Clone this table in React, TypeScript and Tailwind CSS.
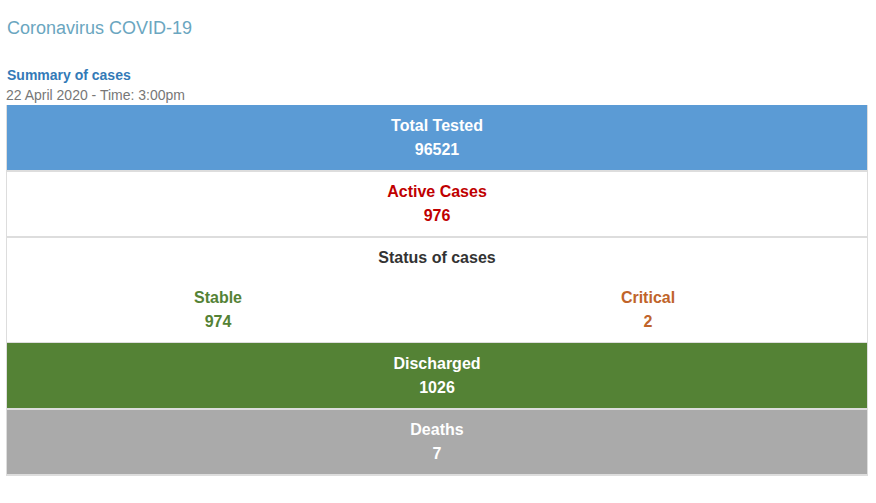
import React from "react";

export default function App() {
  return (
    <div
      className="w-[876px] h-[503px] bg-white overflow-hidden"
      style={{ fontFamily: '"Liberation Sans", Arial, sans-serif' }}
    >
      <div className="pt-[18px] pl-[7px] text-[18px] leading-[20px] text-[#6aa6c0]">
        Coronavirus COVID-19
      </div>
      <div className="mt-[27px] pl-[7px] text-[14px] leading-[20px] font-bold text-[#337ab7]">
        Summary of cases
      </div>
      <div className="pl-[6px] text-[14px] leading-[20px] text-[#777777]">
        22 April 2020 - Time: 3:00pm
      </div>
      <div className="ml-[6px] w-[862px] border-l border-r border-[#dddddd] text-[16px] leading-[24px] font-bold text-center">
        <div className="bg-[#5b9bd5] text-white pt-[9px] pb-[8px] border-b-2 border-[#dddddd]">
          <div>Total Tested</div>
          <div>96521</div>
        </div>
        <div className="bg-white text-[#c00000] pt-[8px] pb-[8px] border-b-2 border-[#dddddd]">
          <div>Active Cases</div>
          <div>976</div>
        </div>
        <div className="bg-white pt-[8px] pb-[8px] border-b border-[#dddddd]">
          <div className="text-[#333333]">Status of cases</div>
          <div className="-ml-[4px] w-[860px] grid grid-cols-2 mt-[16px]">
            <div className="text-[#548235]">
              <div>Stable</div>
              <div>974</div>
            </div>
            <div className="text-[#c0642a]">
              <div>Critical</div>
              <div>2</div>
            </div>
          </div>
        </div>
        <div className="bg-[#548235] text-white pt-[9px] pb-[8px] border-b-2 border-[#dddddd]">
          <div>Discharged</div>
          <div>1026</div>
        </div>
        <div className="bg-[#aaaaaa] text-white pt-[8px] pb-[8px] border-b-2 border-[#dddddd]">
          <div>Deaths</div>
          <div>7</div>
        </div>
      </div>
    </div>
  );
}
